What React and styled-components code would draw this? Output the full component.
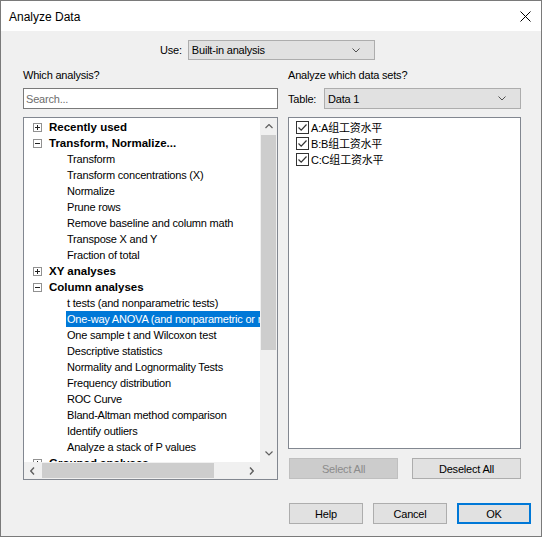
import React from "react";
import styled, { createGlobalStyle } from "styled-components";

const GlobalStyle = createGlobalStyle`
  html, body { margin: 0; padding: 0; background: #f0f0f0; }
  body {
    font-family: "Liberation Sans", Arial, "Noto Sans CJK SC", sans-serif;
    font-size: 11px;
    letter-spacing: -0.2px;
    color: #000;
  }
  * { box-sizing: border-box; }
`;

const Window = styled.div`
  width: 542px;
  height: 537px;
  border: 1px solid #7a7a7a;
  display: flex;
  flex-direction: column;
  background: #f0f0f0;
  overflow: hidden;
`;

const TitleBar = styled.div`
  height: 30px;
  flex: none;
  background: #fff;
  display: flex;
  align-items: center;
  justify-content: space-between;
  padding: 1px 10px 0 8px;
`;

const Title = styled.span`
  font-size: 12px;
  letter-spacing: 0;
`;

const Body = styled.div`
  flex: 1;
  display: flex;
  flex-direction: column;
  padding-top: 9px;
`;

const UseRow = styled.div`
  display: flex;
  align-items: center;
  gap: 6px;
  margin-left: 159px;
  height: 20px;
`;

const Select = styled.div`
  width: ${(p) => p.$w}px;
  height: ${(p) => p.$h}px;
  border: 1px solid #adadad;
  background: #e1e1e1;
  display: flex;
  align-items: center;
  justify-content: space-between;
  padding: 0 14px 0 3px;
`;

const Columns = styled.div`
  display: flex;
  gap: 10px;
  margin-top: 7px;
  padding-left: 22px;
`;

const Column = styled.div`
  width: ${(p) => p.$w}px;
  display: flex;
  flex-direction: column;
`;

const Label = styled.div`
  height: 16px;
  line-height: 16px;
`;

const Search = styled.div`
  margin-top: 5px;
  height: 21px;
  border: 1px solid #7a7a7a;
  background: #fff;
  display: flex;
  align-items: center;
  padding-left: 2px;
  color: #6d6d6d;
`;

const TreeBox = styled.div`
  margin-top: 8px;
  height: 363px;
  border: 1px solid #828790;
  background: #fff;
  display: grid;
  grid-template-columns: 1fr 17px;
  grid-template-rows: 1fr 17px;
`;

const Viewport = styled.div`
  overflow: hidden;
  padding-top: 1px;
`;

const Row = styled.div`
  height: 16px;
  display: flex;
  align-items: center;
  padding-left: ${(p) => (p.$child ? 42 : 9)}px;
  gap: 7px;
  white-space: nowrap;
`;

const Heading = styled.span`
  font-weight: bold;
  font-size: 11.5px;
  letter-spacing: 0;
`;

const Item = styled.span`
  flex: 1;
  height: 16px;
  line-height: 16px;
  padding-left: 1px;
  overflow: hidden;
  white-space: nowrap;
  background: ${(p) => (p.$selected ? "#0078d7" : "transparent")};
  color: ${(p) => (p.$selected ? "#fff" : "#000")};
`;

const VScroll = styled.div`
  background: #f0f0f0;
  display: flex;
  flex-direction: column;
`;

const HScroll = styled.div`
  background: #f0f0f0;
  display: flex;
  align-items: stretch;
`;

const ArrowBtn = styled.div`
  flex: none;
  width: 17px;
  height: 17px;
  display: flex;
  align-items: center;
  justify-content: center;
`;

const VThumb = styled.div`
  height: 215px;
  margin: 0 1px;
  background: #cdcdcd;
`;

const HThumb = styled.div`
  width: 172px;
  margin: 1px 0 1px 1px;
  background: #cdcdcd;
`;

const Spacer = styled.div`
  flex: 1;
`;

const Corner = styled.div`
  background: #f0f0f0;
`;

const TableRow = styled.div`
  margin-top: 5px;
  display: flex;
  align-items: center;
  justify-content: space-between;
  height: 21px;
`;

const ListBox = styled.div`
  margin-top: 8px;
  height: 332px;
  border: 1px solid #828790;
  background: #fff;
  padding: 1px 0 0 7px;
`;

const CheckRow = styled.div`
  height: 16px;
  display: flex;
  align-items: center;
  gap: 2px;
`;

const Box = styled.span`
  width: 13px;
  height: 13px;
  border: 1px solid #333;
  background: #fff;
  display: flex;
  align-items: center;
  justify-content: center;
`;

const ButtonRow = styled.div`
  margin-top: 9px;
  display: flex;
  justify-content: space-between;
  padding-left: 1px;
`;

const Button = styled.div`
  width: ${(p) => p.$w}px;
  height: 21px;
  display: flex;
  align-items: center;
  justify-content: center;
  background: ${(p) => (p.$disabled ? "#cccccc" : "#e1e1e1")};
  color: ${(p) => (p.$disabled ? "#8b8b8b" : "#000")};
  border: ${(p) =>
    p.$default ? "2px solid #0078d7" : p.$disabled ? "1px solid #bfbfbf" : "1px solid #adadad"};
`;

const Footer = styled.div`
  margin-top: 23px;
  display: flex;
  justify-content: flex-end;
  gap: 10px;
  padding-right: 10px;
`;

const Chevron = ({ dir = "down" }) => (
  <svg width="8" height="5" viewBox="0 0 8 5">
    <path
      d={dir === "up" ? "M0.5 4 L4 0.5 L7.5 4" : "M0.5 0.5 L4 4 L7.5 0.5"}
      fill="none"
      stroke="#606060"
      strokeWidth="1.2"
    />
  </svg>
);

const SideChevron = ({ dir }) => (
  <svg width="5" height="8" viewBox="0 0 5 8">
    <path
      d={dir === "left" ? "M4 0.5 L0.8 4 L4 7.5" : "M1 0.5 L4.2 4 L1 7.5"}
      fill="none"
      stroke="#606060"
      strokeWidth="1.4"
    />
  </svg>
);

const SelChevron = () => (
  <svg width="8" height="5" viewBox="0 0 8 5">
    <path d="M0.5 0.5 L4 4 L7.5 0.5" fill="none" stroke="#505050" strokeWidth="1" />
  </svg>
);

const Expander = ({ open }) => (
  <svg width="9" height="9" viewBox="0 0 9 9" style={{ flex: "none" }}>
    <rect x="0.5" y="0.5" width="8" height="8" fill="#fff" stroke="#919191" />
    <path d="M2 4.5 H7" stroke="#222" />
    {!open && <path d="M4.5 2 V7" stroke="#222" />}
  </svg>
);

const CheckMark = () => (
  <svg width="11" height="11" viewBox="0 0 11 11">
    <path d="M1.5 5.5 L4.2 8.2 L9.5 2.5" fill="none" stroke="#333" strokeWidth="1.2" />
  </svg>
);

const CloseX = () => (
  <svg width="11" height="11" viewBox="0 0 11 11">
    <path d="M0.5 0.5 L10.5 10.5 M10.5 0.5 L0.5 10.5" stroke="#000" strokeWidth="1" />
  </svg>
);

const tree = [
  { h: "Recently used", open: false },
  { h: "Transform, Normalize...", open: true },
  { c: "Transform" },
  { c: "Transform concentrations (X)" },
  { c: "Normalize" },
  { c: "Prune rows" },
  { c: "Remove baseline and column math" },
  { c: "Transpose X and Y" },
  { c: "Fraction of total" },
  { h: "XY analyses", open: false },
  { h: "Column analyses", open: true },
  { c: "t tests (and nonparametric tests)" },
  { c: "One-way ANOVA (and nonparametric or mixed)", sel: true },
  { c: "One sample t and Wilcoxon test" },
  { c: "Descriptive statistics" },
  { c: "Normality and Lognormality Tests" },
  { c: "Frequency distribution" },
  { c: "ROC Curve" },
  { c: "Bland-Altman method comparison" },
  { c: "Identify outliers" },
  { c: "Analyze a stack of P values" },
  { h: "Grouped analyses", open: false },
];

const datasets = ["A:A组工资水平", "B:B组工资水平", "C:C组工资水平"];

export default function App() {
  return (
    <>
      <GlobalStyle />
      <Window>
        <TitleBar>
          <Title>Analyze Data</Title>
          <CloseX />
        </TitleBar>
        <Body>
          <UseRow>
            <span>Use:</span>
            <Select $w={187} $h={20}>
              <span>Built-in analysis</span>
              <SelChevron />
            </Select>
          </UseRow>
          <Columns>
            <Column $w={255}>
              <Label>Which analysis?</Label>
              <Search>Search...</Search>
              <TreeBox>
                <Viewport>
                  {tree.map((t, i) =>
                    t.h ? (
                      <Row key={i}>
                        <Expander open={t.open} />
                        <Heading>{t.h}</Heading>
                      </Row>
                    ) : (
                      <Row key={i} $child>
                        <Item $selected={t.sel}>{t.c}</Item>
                      </Row>
                    )
                  )}
                </Viewport>
                <VScroll>
                  <ArrowBtn>
                    <Chevron dir="up" />
                  </ArrowBtn>
                  <VThumb />
                  <Spacer />
                  <ArrowBtn>
                    <Chevron dir="down" />
                  </ArrowBtn>
                </VScroll>
                <HScroll>
                  <ArrowBtn>
                    <SideChevron dir="left" />
                  </ArrowBtn>
                  <HThumb />
                  <Spacer />
                  <ArrowBtn>
                    <SideChevron dir="right" />
                  </ArrowBtn>
                </HScroll>
                <Corner />
              </TreeBox>
            </Column>
            <Column $w={233}>
              <Label>Analyze which data sets?</Label>
              <TableRow>
                <span>Table:</span>
                <Select $w={197} $h={21}>
                  <span>Data 1</span>
                  <SelChevron />
                </Select>
              </TableRow>
              <ListBox>
                {datasets.map((d) => (
                  <CheckRow key={d}>
                    <Box>
                      <CheckMark />
                    </Box>
                    <span>{d}</span>
                  </CheckRow>
                ))}
              </ListBox>
              <ButtonRow>
                <Button $w={109} $disabled>
                  Select All
                </Button>
                <Button $w={109}>Deselect All</Button>
              </ButtonRow>
            </Column>
          </Columns>
          <Footer>
            <Button $w={74}>Help</Button>
            <Button $w={74}>Cancel</Button>
            <Button $w={74} $default>
              OK
            </Button>
          </Footer>
        </Body>
      </Window>
    </>
  );
}
